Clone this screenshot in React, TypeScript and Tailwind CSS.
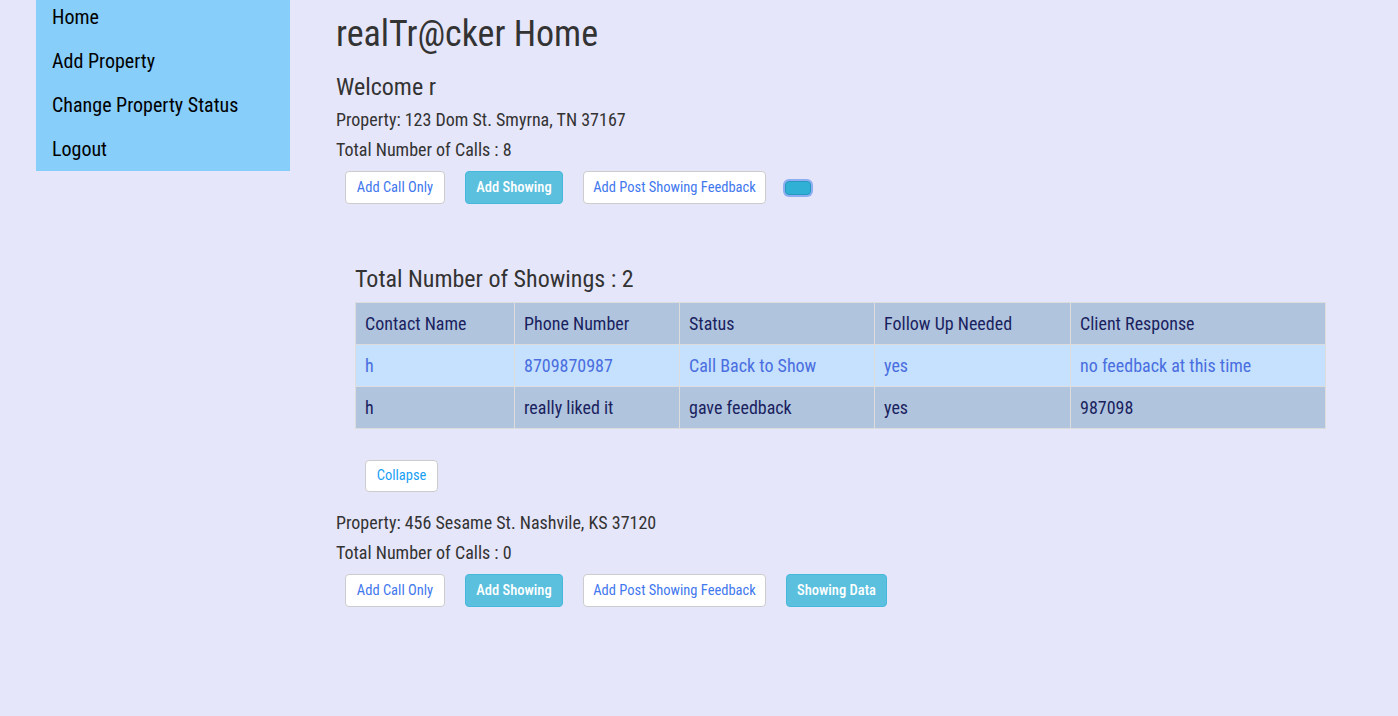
import React from "react";

const font = "font-['Roboto_Condensed',Roboto,'Liberation_Sans_Narrow',sans-serif] font-stretch-condensed";

const NAV = ["Home", "Add Property", "Change Property Status", "Logout"];

const COLS = [
  { label: "Contact Name", w: "w-[159px]" },
  { label: "Phone Number", w: "w-[165px]" },
  { label: "Status", w: "w-[195px]" },
  { label: "Follow Up Needed", w: "w-[196px]" },
  { label: "Client Response", w: "" },
];

const ROWS = [
  { cells: ["h", "8709870987", "Call Back to Show", "yes", "no feedback at this time"], active: true },
  { cells: ["h", "really liked it", "gave feedback", "yes", "987098"], active: false },
];

function Btn({ kind, children, w }: { kind: "default" | "info"; children: React.ReactNode; w: string }) {
  const base = "h-[33px] rounded-[4px] border text-[14.5px] flex items-center justify-center " + w;
  if (kind === "info") {
    return <button className={base + " bg-[#5bc0de] border-[#46b8da] text-white font-medium"}>{children}</button>;
  }
  return <button className={base + " bg-white border-[#ccc] text-[#4278ee]"}>{children}</button>;
}

function PropertyBlock({ address, calls, last }: { address: string; calls: number; last: React.ReactNode }) {
  return (
    <div className="flex flex-col">
      <p className="text-[18px] leading-[30px] text-[#333]">Property: {address}</p>
      <p className="text-[18px] leading-[30px] text-[#333]">Total Number of Calls : {calls}</p>
      <div className="mt-[6px] ml-[9px] flex items-center gap-[20px]">
        <Btn kind="default" w="w-[100px]">Add Call Only</Btn>
        <Btn kind="info" w="w-[98px]">Add Showing</Btn>
        <Btn kind="default" w="w-[183px]">Add Post Showing Feedback</Btn>
        {last}
      </div>
    </div>
  );
}

export default function App() {
  return (
    <div className={"min-h-[716px] w-full bg-[#e6e6fa] flex " + font}>
      <div className="ml-[36px] w-[254px] shrink-0 self-start">
        <ul className="bg-[#87cefa] -mt-[5px] pl-[16px]">
          {NAV.map((n) => (
            <li key={n} className="h-[44px] flex items-center text-[20px] text-black">
              {n}
            </li>
          ))}
        </ul>
      </div>

      <main className="ml-[46px] mr-[72px] flex-1 flex flex-col">
        <h1 className="mt-[12px] text-[36px] leading-[44px] text-[#333]">realTr@cker Home</h1>
        <h3 className="mt-[16px] text-[24px] leading-[30px] text-[#333]">Welcome r</h3>
        <div className="mt-[3px]">
          <PropertyBlock
            address="123 Dom St. Smyrna, TN 37167"
            calls={8}
            last={
              <button className="ml-[-1px] h-[14px] w-[26px] rounded-[4px] border border-[#269abc] bg-[#31b0d5] shadow-[0_0_0_2px_rgba(102,150,240,0.7)]" />
            }
          />
        </div>

        <div className="mt-[59px] ml-[19px] flex flex-col">
          <h3 className="text-[24px] leading-[32px] text-[#333]">Total Number of Showings : 2</h3>
          <table className="mt-[7px] w-full border-collapse border border-[#ddd] text-[18px]">
            <thead>
              <tr className="bg-[#b0c4de] text-[#1a1f5e]">
                {COLS.map((c) => (
                  <th key={c.label} className={"h-[42px] border border-[#ddd] px-[9px] text-left font-normal " + c.w}>
                    {c.label}
                  </th>
                ))}
              </tr>
            </thead>
            <tbody>
              {ROWS.map((r, i) => (
                <tr key={i} className={r.active ? "bg-[#c5e1fd] text-[#4a6ee0]" : "bg-[#b0c4de] text-[#1a1f5e]"}>
                  {r.cells.map((c, j) => (
                    <td key={j} className="h-[42px] border border-[#ddd] px-[9px]">
                      {c}
                    </td>
                  ))}
                </tr>
              ))}
            </tbody>
          </table>
          <div className="mt-[31px] ml-[10px]">
            <button className="h-[32px] w-[73px] rounded-[4px] border border-[#ccc] bg-white text-[14.5px] text-[#18a0f5]">
              Collapse
            </button>
          </div>
        </div>

        <div className="mt-[16px]">
          <PropertyBlock
            address="456 Sesame St. Nashvile, KS 37120"
            calls={0}
            last={<Btn kind="info" w="w-[101px]">Showing Data</Btn>}
          />
        </div>
      </main>
    </div>
  );
}
